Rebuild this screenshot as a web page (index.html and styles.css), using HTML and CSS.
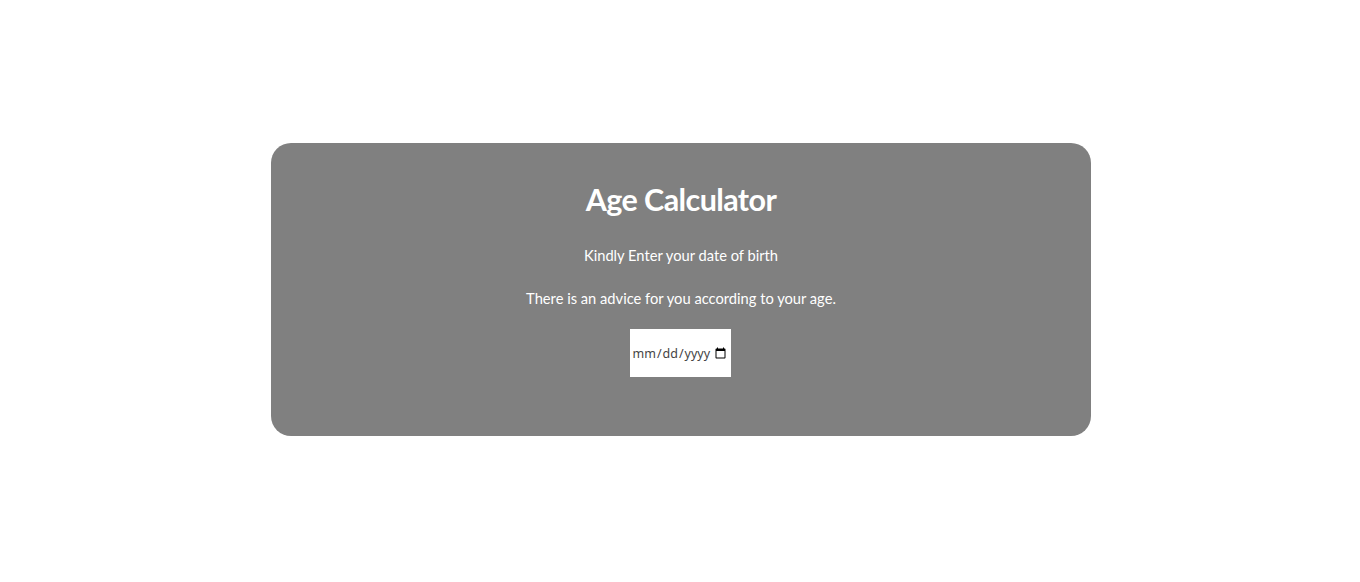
FILE: index.html
```html
<!DOCTYPE html>
<html lang="en">
<head>
<meta charset="utf-8">
<title>Age Calculator</title>
<link rel="stylesheet" href="styles.css">
</head>
<body>
<main class="page">
  <section class="card">
    <h1 class="title">Age Calculator</h1>
    <p class="text">Kindly Enter your date of birth</p>
    <p class="text">There is an advice for you according to your age.</p>
    <input class="date" type="date">
  </section>
</main>
</body>
</html>
```

FILE: styles.css
```css
html, body {
  margin: 0;
  padding: 0;
  background: #ffffff;
}
.page {
  height: 582px;
  display: flex;
  align-items: center;
  justify-content: center;
}
.card {
  width: 820px;
  height: 293px;
  box-sizing: border-box;
  background: #808080;
  border-radius: 20px;
  display: flex;
  flex-direction: column;
  align-items: center;
  padding-top: 36px;
  font-family: Lato, "Open Sans", sans-serif;
  color: #ffffff;
  margin-top: -3px;
  margin-left: 2px;
}
.title {
  margin: 0;
  font-size: 30.5px;
  font-weight: 700;
  line-height: 40px;
  letter-spacing: -0.6px;
}
.text {
  margin: 0;
  font-size: 14.7px;
  line-height: 20px;
}
.title + .text {
  margin-top: 26px;
}
.text + .text {
  margin-top: 23px;
}
.date {
  margin-top: 21px;
  margin-right: 2px;
  width: 101px;
  height: 48px;
  box-sizing: border-box;
  border: none;
  background: #ffffff;
  padding: 0 2px;
  font-family: "Noto Sans", "Open Sans", sans-serif;
  font-size: 12.5px;
  color: #444444;
}
```
